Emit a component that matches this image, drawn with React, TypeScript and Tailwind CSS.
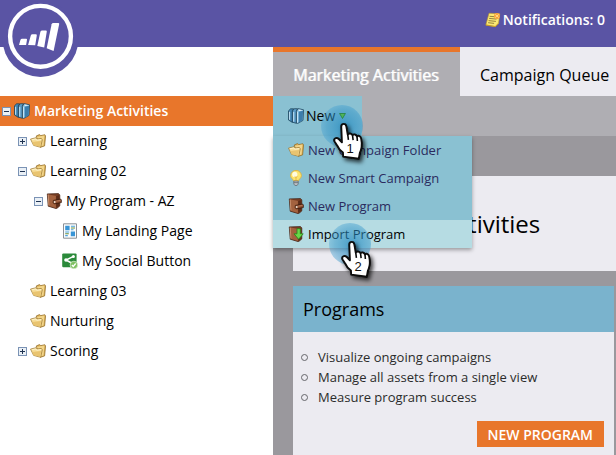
import { useState, type ReactNode } from "react";

function BooksIcon() {
  return (
    <svg width="16" height="16" viewBox="0 0 16 16" className="shrink-0" aria-hidden="true">
      <path d="M.5 2.8 2.6.8h3.2L4.4 2.6v11.8L.5 12z" fill="#4487b5" stroke="#16394f" strokeWidth=".7" />
      <path d="M4.4 3 6.4.7h3.2L8.4 2.8v12.5l-4-1.1z" fill="#5b9cc8" stroke="#16394f" strokeWidth=".7" />
      <path d="M8.4 3.2 10.2.6l5.4 1.2-.6 10.6-5.2 3-1.4-.4z" fill="#7dbbe0" stroke="#16394f" strokeWidth=".7" />
      <path d="M10.8 3.7v11l3.8-2.4.5-9.6z" fill="#3c7dab" />
      <path d="M1.6 3.8v8M5.7 4v9.6M9.5 3.8v10.8" stroke="#c3e2f3" strokeWidth="1" />
      <path d="M10.6 1.4 15 2.3l-4.4 1z" fill="#e6eef3" />
    </svg>
  );
}

function FolderIcon() {
  return (
    <svg width="16" height="16" viewBox="0 0 16 16" className="shrink-0" aria-hidden="true">
      <path d="M6.2 3 9.4 1.6l1.4 1 4-.9.8 1.2-1 10-4.2 1.4z" fill="#d9ad55" stroke="#8c6722" strokeWidth=".7" />
      <path d="M7 3.8 14.4 2.6l-.9 10-3 .8z" fill="#f2d58b" />
      <path d="M.5 6.1 6.1 4.7l1 1.3 4-.6 1.2 1.1-1.6 7.8L3.6 12.4z" fill="#f7dd96" stroke="#97712a" strokeWidth=".7" />
      <path d="m1.7 6.8 4-.9.9 1.3 4.6-.6" fill="none" stroke="#fff6d5" strokeWidth=".8" />
      <path d="M3.6 12.2 2.2 9l8.9-1-1 5.8z" fill="#e9c470" />
    </svg>
  );
}

function ProgramIcon({ download = false }: { download?: boolean }) {
  return (
    <svg width="16" height="16" viewBox="0 0 16 16" className="shrink-0" aria-hidden="true">
      <path d="M1.3.9 12.5.6l1.3 1.3v11l-3.3 2.8L2.2 13.2z" fill="#7a4026" stroke="#3d1d10" strokeWidth=".7" />
      <path d="m1.8 1.3 8.1 1.6v12L2.6 12.7z" fill="#a3623f" />
      <path d="m2.2 1.7.7 10.7" stroke="#d09a78" strokeWidth=".8" />
      <path d="m10.2 3.1 3-1v10.2l-3 2.6z" fill="#5b2b18" />
      {download ? (
        <path d="M9 2.7h3.3v5.1h2.9l-4.6 5.5L6 7.8h3z" fill="#69d948" stroke="#258419" strokeWidth=".8" />
      ) : (
        <>
          <path d="M7.4 7.4 14.6 6l.8 1v2.5l-6.8 1.3-1.6-1z" fill="#8d4e31" stroke="#32170c" strokeWidth=".7" />
          <circle cx="8.7" cy="9" r="1" fill="#efe3d5" />
          <path d="m10.3 8.2 4.2-.8" stroke="#c68b68" strokeWidth=".7" />
        </>
      )}
    </svg>
  );
}

function BulbIcon() {
  return (
    <svg width="16" height="16" viewBox="0 0 16 16" className="shrink-0" aria-hidden="true">
      <path d="M8 .4a5.3 5.3 0 0 0-5.4 5.2c0 2.7 2.6 3.4 2.9 5.3h5c.3-1.9 2.9-2.6 2.9-5.3A5.3 5.3 0 0 0 8 .4z" fill="#fce56c" stroke="#e3ae35" strokeWidth=".8" />
      <ellipse cx="6.8" cy="4.4" rx="2.6" ry="2.6" fill="#fffce0" />
      <path d="m6.6 6.4 1.4 1 1.4-1M8 7.4v3" fill="none" stroke="#d79a2b" strokeWidth=".6" />
      <path d="M5.8 11h4.4v3L9 15.6H7L5.8 14z" fill="#b9bec2" stroke="#5c666d" strokeWidth=".7" />
      <path d="M5.8 12.6h4.4" stroke="#5c666d" strokeWidth=".7" />
    </svg>
  );
}

function LandingPageIcon() {
  return (
    <svg width="16" height="16" viewBox="0 0 16 16" className="shrink-0" aria-hidden="true">
      <path d="M1.5.8h13v14.4h-13z" fill="#fbfcfd" stroke="#8b9096" />
      <path d="M3.2 2.8h4.4v4.4H3.2zM8.8 8.6h4.2v4.6H8.8z" fill="#3995d6" />
      <path d="M9 3.3h4M9 6.7h2.5M3.2 9h4M3.2 12.6h2.6" stroke="#4aa3de" strokeWidth="1.1" />
      <path d="M9 5h4M3.2 10.8h3.6" stroke="#6a8f3c" strokeWidth="1.1" />
    </svg>
  );
}

function SocialIcon() {
  return (
    <svg width="16" height="16" viewBox="0 0 16 16" className="shrink-0" aria-hidden="true">
      <rect x=".2" y=".4" width="14.4" height="13.8" rx="1.2" fill="#2b8a3a" />
      <path d="M11.5 3.3 4 7l5.5 3" fill="none" stroke="#fff" strokeWidth="1.5" />
      <circle cx="11.4" cy="3.5" r="1.5" fill="#fff" />
      <circle cx="4" cy="7" r="1.8" fill="#fff" />
      <circle cx="11.9" cy="12" r="3.8" fill="#7fc063" stroke="#dff0d5" strokeWidth=".7" />
      <path d="m9.9 12 1.4 1.5 2.4-3" fill="none" stroke="#fff" strokeWidth="1.3" />
    </svg>
  );
}

function NotesIcon() {
  return (
    <svg width="16" height="16" viewBox="0 0 16 16" className="shrink-0" aria-hidden="true">
      <path d="m4 1.2 10.8.6-1.2 9.5-3.4 3.4L.8 13z" fill="#fbe873" stroke="#b5912b" strokeWidth=".6" />
      <path d="m1 12.4 9.3 1.5 3.2-3.1-.3 1.4-3 2.8L.8 13.4z" fill="#c79b2a" />
      <path d="m4.6 4.3 5 .4M4.1 6.4l7.4.7M3.6 8.6l7.3.8M3.1 10.7l6 .7" stroke="#8a7739" strokeWidth=".9" />
      <circle cx="12" cy="4" r="3" fill="#f9a23b" />
      <path d="m10.2 2.4 3.6 3.2m0-3.2-3.6 3.2" stroke="#ffe08c" strokeWidth=".9" />
    </svg>
  );
}

function Logo() {
  return (
    <svg width="78" height="78" viewBox="0 0 78 78" aria-label="Marketo" role="img">
      <circle cx="38.5" cy="39" r="38" fill="#5a54a4" />
      <circle cx="38.5" cy="36.3" r="30.4" fill="none" stroke="#fff" strokeWidth="4.4" />
      <g fill="#fff">
        <path d="M18.5 39.8q.5-1 1.5-1h4.2q1 0 .8 1l-.9 5.2H17z" />
        <path d="M28.8 35.4q.4-1.2 1.6-1.2h3.4q1.2 0 1 1.2l-1.6 9.9-7.1-.3z" />
        <path d="M38.4 31.8q.4-1.4 1.8-1.4h3.6q1.2 0 1 1.2l-2.6 16-6.9-1.6z" />
        <path d="M49.6 24.3q.4-1.4 1.8-1.4h4.8q1.2 0 1 1.2L51.6 51l-6.9-2.7z" />
      </g>
    </svg>
  );
}

function Pointer({ step }: { step: number }) {
  return (
    <svg width="54" height="64" viewBox="0 0 54 64" aria-label={`Step ${step}`} role="img">
      <defs>
        <radialGradient id={`halo-${step}`} cx="55%" cy="52%" r="55%">
          <stop offset="0" stopColor="#1d86bd" stopOpacity=".72" />
          <stop offset=".75" stopColor="#3294c8" stopOpacity=".5" />
          <stop offset="1" stopColor="#4aa3d2" stopOpacity=".42" />
        </radialGradient>
        <filter id={`shade-${step}`} x="-30%" y="-30%" width="170%" height="170%">
          <feDropShadow dx="2" dy="2.5" stdDeviation="1.8" floodColor="#000" floodOpacity=".75" />
        </filter>
      </defs>
      <circle cx="21" cy="22" r="21" fill={`url(#halo-${step})`} />
      <g transform="translate(-2.6 -2.6) scale(1.12)">
        <path
          d="M20.4 22.6q0-2.5 2.2-2.5 2 0 2.4 2.3l1.2 7.3q.6-1.2 2-1.1 1.7.1 2.2 1.7.8-1 2.1-.8 1.4.2 1.9 1.8.9-.9 2-.5 1.4.5 1.8 2.4.9 4.4.4 7.7-.4 2.6-1.6 5l-.9 5.3-14-1.9-.2-3.7q-3.8-2.7-5.2-6.3l-2.3-3.5q-.9-2 .8-2.9 1.5-.7 3 .7l2.8 2.9z"
          fill="#fff"
          stroke="#090909"
          strokeWidth="1.7"
          strokeLinejoin="round"
          filter={`url(#shade-${step})`}
        />
        <path d="m26.2 29.7.6 4.7M30.5 30.5l.5 4.1M34.5 31.7l.3 3.7" stroke="#090909" strokeWidth="1.4" />
      </g>
      <text x="29" y="49" textAnchor="middle" fontSize="13" fontFamily="Liberation Sans, sans-serif" fill="#111">
        {step}
      </text>
    </svg>
  );
}

type Node = { label: string; level: number; icon: ReactNode; toggle?: "open" | "closed" };

const nodes: Node[] = [
  { label: "Marketing Activities", level: 0, icon: <BooksIcon />, toggle: "open" },
  { label: "Learning", level: 1, icon: <FolderIcon />, toggle: "closed" },
  { label: "Learning 02", level: 1, icon: <FolderIcon />, toggle: "open" },
  { label: "My Program - AZ", level: 2, icon: <ProgramIcon />, toggle: "open" },
  { label: "My Landing Page", level: 3, icon: <LandingPageIcon /> },
  { label: "My Social Button", level: 3, icon: <SocialIcon /> },
  { label: "Learning 03", level: 1, icon: <FolderIcon /> },
  { label: "Nurturing", level: 1, icon: <FolderIcon /> },
  { label: "Scoring", level: 1, icon: <FolderIcon />, toggle: "closed" },
];

const indents = ["pl-[2px]", "pl-[18px]", "pl-[34px]", "pl-[50px]"];

function Toggle({ state, label }: { state: "open" | "closed"; label: string }) {
  return (
    <button type="button" aria-label={`${state === "open" ? "Collapse" : "Expand"} ${label}`} className="shrink-0">
      <svg width="9" height="9" viewBox="0 0 9 9" className="block">
        <rect x=".5" y=".5" width="8" height="8" fill="#eaf0f6" stroke="#7b93b5" />
        <path d={state === "open" ? "M2 4.5h5" : "M2 4.5h5M4.5 2v5"} stroke="#1f3352" />
      </svg>
    </button>
  );
}

function Tree() {
  const [selected, setSelected] = useState(0);
  return (
    <ul>
      {nodes.map((node, i) => (
        <li
          key={node.label}
          className={`flex h-[30px] items-center gap-[3px] ${indents[node.level]} ${
            selected === i ? "bg-[#e8762b] font-semibold text-white" : "text-black"
          }`}
        >
          {node.toggle ? <Toggle state={node.toggle} label={node.label} /> : <span className="w-[9px] shrink-0" />}
          <button type="button" onClick={() => setSelected(i)} className="flex items-center gap-1 whitespace-nowrap text-[14px]">
            {node.icon}
            <span className="pb-[2px]">{node.label}</span>
          </button>
        </li>
      ))}
    </ul>
  );
}

const menuItems = [
  { label: "New Campaign Folder", icon: <FolderIcon /> },
  { label: "New Smart Campaign", icon: <BulbIcon /> },
  { label: "New Program", icon: <ProgramIcon /> },
  { label: "Import Program", icon: <ProgramIcon download />, active: true },
];

function NewMenu() {
  return (
    <div className="relative z-10 w-[89px]">
      <button type="button" className="flex h-10 w-full items-center gap-[2px] bg-[#8ac1d2] pl-[15px] text-[14px] text-black">
        <BooksIcon />
        <span className="pb-[2px]">New</span>
        <svg width="7" height="6" viewBox="0 0 8 7" className="relative z-10 ml-[2px]" aria-hidden="true">
          <path d="M.6.6h6.8L4 6.4z" fill="#4fb45c" stroke="#23813a" strokeWidth=".9" />
        </svg>
      </button>
      <ul className="absolute top-full left-0 w-[199px] bg-[#8ac1d2] shadow-[0_2px_4px_rgba(0,0,0,0.35)]">
        {menuItems.map((item) => (
          <li key={item.label}>
            <button
              type="button"
              className={`flex h-7 w-full items-center gap-1 pl-[15px] text-[13px] whitespace-nowrap ${
                item.active ? "bg-[#b6dce3] text-black" : "text-[#2b2b5e]"
              }`}
            >
              {item.icon}
              <span className="pt-[2px]">{item.label}</span>
            </button>
          </li>
        ))}
      </ul>
      <div className="pointer-events-none absolute top-2 left-12">
        <Pointer step={1} />
      </div>
      <div className="pointer-events-none absolute top-[126px] left-14">
        <Pointer step={2} />
      </div>
    </div>
  );
}

const benefits = ["Visualize ongoing campaigns", "Manage all assets from a single view", "Measure program success"];

export default function App() {
  return (
    <div className="flex min-h-screen flex-col bg-white font-['Open_Sans','Noto_Sans',sans-serif]">
      <header className="relative flex h-[47px] items-center justify-end bg-[#5a54a4] pr-[11px]">
        <a href="#home" className="absolute top-0 left-[2px]">
          <Logo />
        </a>
        <a href="#notifications" className="mb-2 flex items-center gap-[2px] text-[14px] font-semibold text-white">
          <NotesIcon />
          Notifications: 0
        </a>
      </header>

      <div className="flex flex-1">
        <aside className="w-[273px] shrink-0 pt-[49px]">
          <Tree />
        </aside>

        <main className="flex min-w-0 flex-1 flex-col bg-[#9a989d]">
          <nav className="flex h-[49px] bg-[#ecebf1] text-[16px] whitespace-nowrap">
            <a href="#activities" className="flex w-[187px] shrink-0 items-center border-t-[5px] border-[#e8762b] bg-[#afaeb3] pt-[2px] pl-5 text-white [text-shadow:1px_0_0_rgba(255,255,255,0.7)]">
              Marketing Activities
            </a>
            <a href="#queue" className="flex items-center pt-[7px] pl-5 text-black">
              Campaign Queue
            </a>
          </nav>

          <div className="h-10 bg-[#afaeb3]">
            <NewMenu />
          </div>

          <div className="flex flex-1 flex-col gap-[15px] pt-10 pl-5">
            <section className="flex h-[95px] items-center bg-[#ecebf1] pl-[29px]">
              <h1 className="text-[24px] text-black">Marketing Activities</h1>
            </section>

            <section className="mr-[2px] flex-1 bg-[#ecebf1] pb-[7px]">
              <h2 className="flex h-[46px] items-center bg-[#7ab3cd] pl-[10px] text-[18px] text-black">Programs</h2>
              <ul className="pt-[15px] text-[13px] leading-5 text-[#2b2b2b]">
                {benefits.map((text) => (
                  <li key={text} className="flex items-center gap-[10px] pl-2">
                    <span className="size-[7px] rounded-full border border-[#66666b]" />
                    {text}
                  </li>
                ))}
              </ul>
              <div className="flex justify-end pt-[14px] pr-[10px]">
                <button type="button" className="h-[26px] bg-[#e8762b] px-[11px] text-[14px] font-semibold text-white">
                  NEW PROGRAM
                </button>
              </div>
            </section>
          </div>
        </main>
      </div>
    </div>
  );
}
